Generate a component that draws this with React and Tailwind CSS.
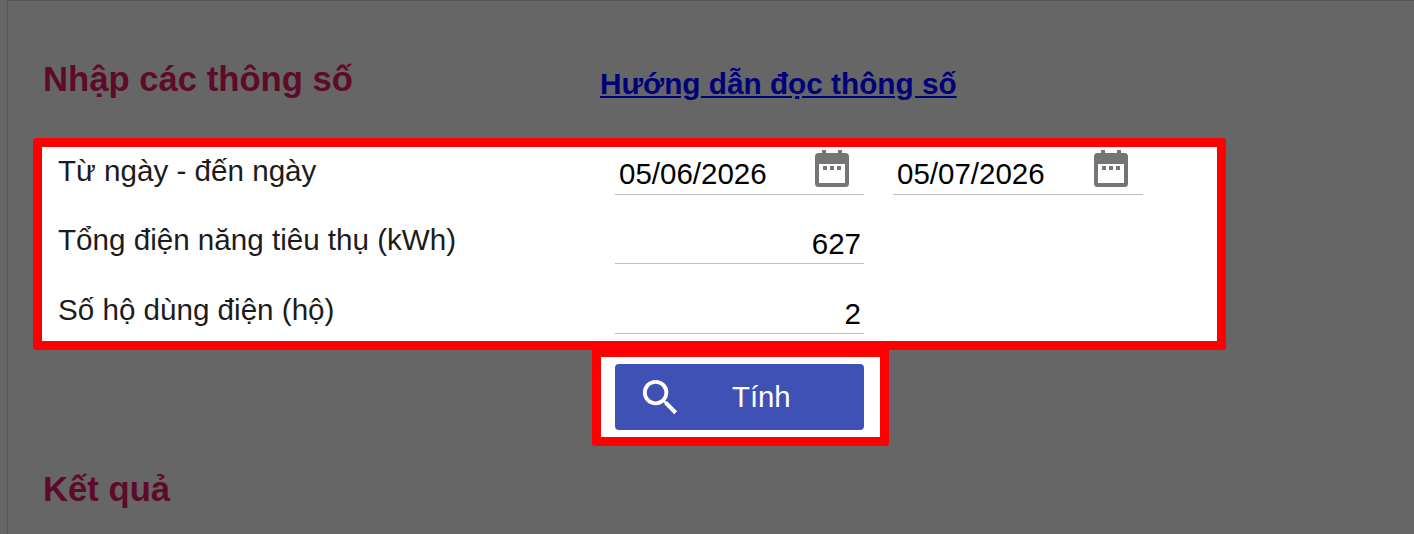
function CalendarIcon() {
  return (
    <svg width="34" height="37" viewBox="0 0 34 37" className="block" fill="#757575">
      <path fillRule="evenodd" d="M7 0h4v3h12V0h4v3h3.500A3.500 3.500 0 0 1 34 6.500v27a3.500 3.500 0 0 1-3.500 3.500h-27A3.500 3.500 0 0 1 0 33.500v-27A3.500 3.500 0 0 1 3.500 3H7zM4 14v19h26V14z" />
      <rect x="8" y="16" width="4" height="4" />
      <rect x="15" y="16" width="4" height="4" />
      <rect x="22" y="16" width="4" height="4" />
    </svg>
  );
}

function DateField({ value }) {
  return (
    <div className="h-[48px] border-b border-[#bdbdbd] flex items-start justify-between pl-[4px] pr-[15px]">
      <span className="mt-[8px] text-[29.5px] leading-[38px] text-black">{value}</span>
      <span className="mt-[3px]"><CalendarIcon /></span>
    </div>
  );
}

function NumberField({ value }) {
  return (
    <div className="h-[49px] border-b border-[#bdbdbd] text-right pr-[3px] pt-[10px] text-[29.5px] leading-[38px] text-black">
      {value}
    </div>
  );
}

function Label({ children, className }) {
  return <div className={`text-[29.6px] leading-[38px] text-[#1c1c1c] pl-[16px] ${className}`}>{children}</div>;
}

export default function App() {
  return (
    <div className="h-[534px] overflow-hidden bg-[#666666] font-['Liberation_Sans',Arial,sans-serif]">
      <div className="ml-[7px] h-full border-l border-t border-[#555555]">
        <div className="flex items-start pl-[35px] pt-[57px] h-[137px]">
          <h2 className="w-[557px] text-[34.67px] leading-[42px] font-bold text-[#5e0a28]">Nhập các thông số</h2>
          <a href="#" className="mt-[7px] text-[29.75px] leading-[38px] font-bold text-[#00007a] underline">Hướng dẫn đọc thông số</a>
        </div>
        <section className="ml-[25px] w-[1193px] h-[212px] box-border border-[9px] border-[#ff0000] rounded-[3px] bg-white grid grid-cols-[544px_249px_250px] gap-x-[29px] content-start">
          <Label className="pt-[5px]">Từ ngày - đến ngày</Label>
          <DateField value="05/06/2026" />
          <DateField value="05/07/2026" />
          <div className="col-span-3 h-[20px]" />
          <Label className="pt-[6px]">Tổng điện năng tiêu thụ (kWh)</Label>
          <NumberField value="627" />
          <div />
          <div className="col-span-3 h-[21px]" />
          <Label className="pt-[6px]">Số hộ dùng điện (hộ)</Label>
          <NumberField value="2" />
        </section>
        <div className="relative -mt-[2px] ml-[584px] w-[297px] h-[98px] box-border border-[9px] border-[#ff0000] rounded-[3px] bg-white pt-[7px] pl-[14px]">
          <button className="w-[249px] h-[66px] rounded-[4px] bg-[#3f51b5] text-white flex items-center">
            <svg width="47" height="47" viewBox="0 0 24 24" className="ml-[22px] shrink-0" fill="#ffffff">
              <path d="M15.500 14h-.79l-.28-.27A6.470 6.470 0 0 0 16 9.500 6.500 6.500 0 1 0 9.500 16c1.610 0 3.090-.59 4.230-1.570l.27.28v.79l5 4.990L20.490 19l-4.990-5zm-6 0C7.010 14 5 11.990 5 9.500S7.010 5 9.500 5 14 7.010 14 9.500 11.990 14 9.500 14z" />
            </svg>
            <span className="ml-[48px] text-[29.33px] leading-[38px]">Tính</span>
          </button>
        </div>
        <h2 className="ml-[35px] mt-[22px] text-[34.67px] leading-[42px] font-bold text-[#5e0a28]">Kết quả</h2>
      </div>
    </div>
  );
}
